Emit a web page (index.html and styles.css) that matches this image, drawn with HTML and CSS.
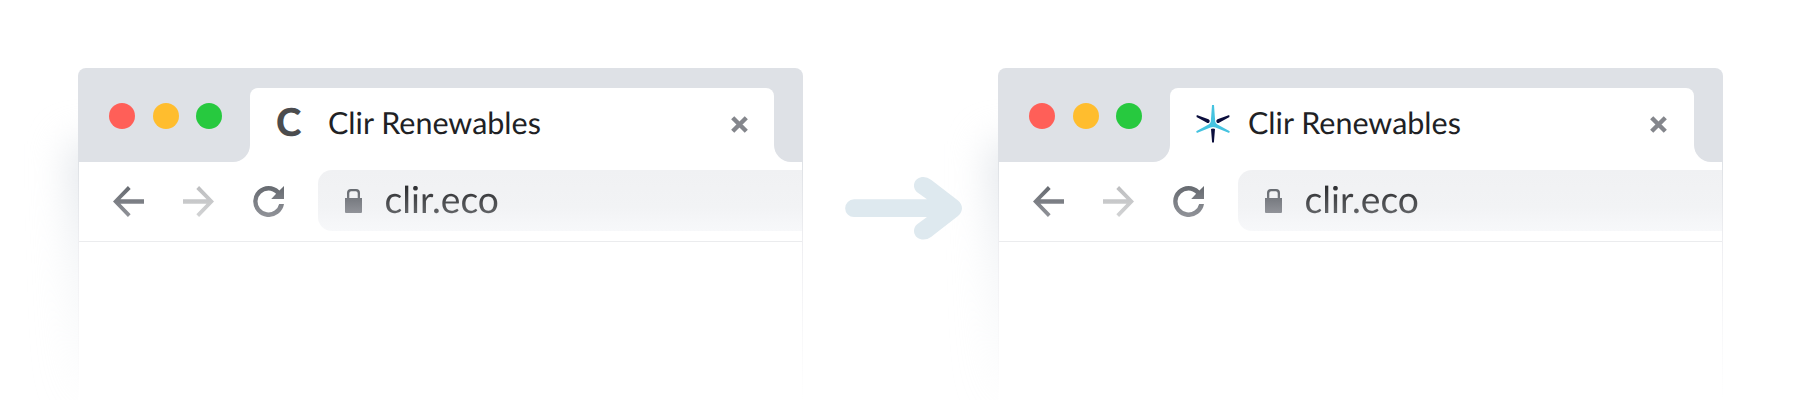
FILE: index.html
```html
<!DOCTYPE html>
<html lang="en">
<head>
<meta charset="utf-8">
<title>Clir Renewables</title>
<link rel="stylesheet" href="styles.css">
</head>
<body>
<svg class="defs" width="0" height="0" aria-hidden="true">
  <defs>
    <linearGradient id="ink" x1="0" y1="0" x2="0" y2="1"><stop offset="0" stop-color="#666a70"/><stop offset="1" stop-color="#919399"/></linearGradient>
    <linearGradient id="ink-light" x1="0" y1="0" x2="0" y2="1"><stop offset="0" stop-color="#bdbec0"/><stop offset="1" stop-color="#d2d3d4"/></linearGradient>
    <symbol id="back" viewBox="4 4 16 16"><path d="M20 10.800H7.830l5.300-5.300L11.700 4l-7.700 8 7.700 8 1.410-1.410L7.830 13.200H20z"/></symbol>
    <symbol id="forward" viewBox="4 4 16 16"><path d="M4 10.800h12.170l-5.300-5.300L12.300 4l7.700 8-7.700 8-1.410-1.410L16.170 13.200H4z"/></symbol>
    <symbol id="reload" viewBox="4 4 16 16"><path d="M17.650 6.350A7.960 7.960 0 0 0 12 4a8 8 0 1 0 8 9.300H17.500A5.650 5.650 0 1 1 12 6.350c1.560 0 2.900.64 3.950 1.700L13.400 10.700H20V4z"/></symbol>
    <symbol id="lock" viewBox="0 0 17 24"><path fill-rule="evenodd" d="M0 9h2V4a4 4 0 0 1 4-4h5a4 4 0 0 1 4 4v5h2v14a1 1 0 0 1-1 1H1a1 1 0 0 1-1-1zM4.300 9h8.400V4.300a2 2 0 0 0-2-2H6.300a2 2 0 0 0-2 2z"/></symbol>
    <symbol id="close" viewBox="0 0 17 17"><path d="M1.700 1.700l13.600 13.600M15.300 1.700L1.700 15.300" fill="none" stroke="#84868c" stroke-width="4.400"/></symbol>
  </defs>
</svg>
<main class="scene">
  <section class="browser">
    <header class="tabbar">
      <div class="controls"><i class="dot red"></i><i class="dot yellow"></i><i class="dot green"></i></div>
      <div class="tab-slot"><div class="tab">
        <span class="favicon letter">C</span>
        <span class="title">Clir Renewables</span>
        <svg class="close"><use href="#close"/></svg>
      </div></div>
      <div class="tab-end"></div>
    </header>
    <nav class="toolbar">
      <svg class="nav-icon" fill="url(#ink)"><use href="#back"/></svg>
      <svg class="nav-icon" fill="url(#ink-light)"><use href="#forward"/></svg>
      <svg class="nav-icon" fill="url(#ink)"><use href="#reload"/></svg>
      <div class="address"><svg class="lock" fill="url(#ink)"><use href="#lock"/></svg><span class="url">clir.eco</span></div>
    </nav>
    <div class="page"></div>
  </section>

  <svg class="arrow" viewBox="0 0 117 63" fill="#dee9ef"><path d="M9 22.300H82L72.500 15.500C66 10 69 0 78.500 0Q82.500 0 86 2.700L113 23.500Q117 27 117 31.300T113 39L86 60Q82.500 62.500 78.500 62.500C69 62.500 66 52 72.500 47L82 40H9A8.800 8.800 0 0 1 9 22.300z"/></svg>

  <section class="browser updated">
    <header class="tabbar">
      <div class="controls"><i class="dot red"></i><i class="dot yellow"></i><i class="dot green"></i></div>
      <div class="tab-slot"><div class="tab">
        <svg class="favicon star" viewBox="0 0 34 38">
          <path fill="#0b0e3d" d="M.8 10L12.500 14.300Q14.600 15.700 13 17.800Q11.800 18.400 10.500 17.500L.5 12zM33.200 10L21.500 14.300Q19.400 15.700 21 17.800Q22.200 18.400 23.500 17.500L33.500 12zM15 24Q17 23 19 24L17.900 37.500H16.100z"/>
          <path fill="#45c3e0" d="M16 0h2L19.200 16.500Q19.500 18.300 21 19.200L33.800 26.200L33.100 27.900L19.500 22.600Q17 21.500 14.500 22.600L.9 27.900L.2 26.200L13 19.200Q14.500 18.300 14.800 16.500z"/>
        </svg>
        <span class="title">Clir Renewables</span>
        <svg class="close"><use href="#close"/></svg>
      </div></div>
      <div class="tab-end"></div>
    </header>
    <nav class="toolbar">
      <svg class="nav-icon" fill="url(#ink)"><use href="#back"/></svg>
      <svg class="nav-icon" fill="url(#ink-light)"><use href="#forward"/></svg>
      <svg class="nav-icon" fill="url(#ink)"><use href="#reload"/></svg>
      <div class="address"><svg class="lock" fill="url(#ink)"><use href="#lock"/></svg><span class="url">clir.eco</span></div>
    </nav>
    <div class="page"></div>
  </section>
</main>
</body>
</html>
```

FILE: styles.css
```css
* { box-sizing: border-box; }
body { margin: 0; background: #fff; font-family: Lato, sans-serif; overflow: hidden; text-rendering: geometricPrecision; }
.defs { position: absolute; }
svg { display: block; flex: none; }
.scene { display: flex; align-items: flex-start; height: 400px; padding: 68px 77px 0 78px; }
.browser { position: relative; flex: none; width: 725px; height: 332px; display: flex; flex-direction: column; }
.browser::before {
  content: ""; position: absolute; z-index: -1; left: -8px; top: 76px; width: 100px; height: 270px;
  background: linear-gradient(#dfe3e8, rgba(225, 230, 235, .4) 45%, rgba(255, 255, 255, 0));
  filter: blur(19px);
}
/* side borders dissolve toward the bottom of the window */
.browser::after {
  content: ""; position: absolute; inset: 94px 0 0; pointer-events: none;
  background:
    linear-gradient(#dfe2e6, #efeff2 35%, #fff) left / 1px 100% no-repeat,
    linear-gradient(#dfe2e6, #efeff2 35%, #fff) right / 1px 100% no-repeat;
}
.tabbar { display: flex; height: 94px; background: #fff; border-radius: 8px 8px 0 0; overflow: hidden; }
.controls { display: flex; gap: 17.500px; width: 172px; padding: 35px 0 0 31px; background: #dee1e6; border-bottom-right-radius: 17px; flex: none; }
.dot { width: 26px; height: 26px; border-radius: 50%; }
.red { background: #ff5f58; }
.yellow { background: #ffbd2e; }
.green { background: #27c93f; }
.tab-slot { flex: 1; padding-top: 20px; background: linear-gradient(#dee1e6 40px, #fff 40px); }
.tab { display: flex; align-items: center; height: 74px; padding: 0 26px 3px 26px; background: #fff; border-radius: 8px 8px 0 0; }
.updated .tab { padding-right: 27px; }
.favicon { flex: none; width: 34px; margin-right: 18px; }
.letter { font-size: 38.500px; font-weight: 900; line-height: 70px; padding-bottom: 3px; color: #4b4c4e; }
.star { height: 38px; }
.title { flex: 1; padding-bottom: 2px; font-size: 30.500px; line-height: 40px; color: #202124; white-space: nowrap; }
.close { width: 17px; height: 17px; margin-top: 2px; }
.tab-end { width: 29px; background: #dee1e6; border-bottom-left-radius: 17px; flex: none; }
.toolbar { display: flex; align-items: center; gap: 39px; height: 80px; padding: 0 1px 2px 35px; background: #fff; border-bottom: 1px solid #ebecee; }
.nav-icon { width: 31px; height: 31px; margin-top: 2px; }
.address { display: flex; align-items: center; flex: 1; height: 61px; margin-left: -5px; padding-left: 27px; border-radius: 14px 0 0 14px; background: linear-gradient(#f0f1f3, #f2f3f5 60%, #f7f8fa); }
.lock { width: 17px; height: 24px; }
.url { margin: -4px 0 0 22.500px; font-size: 37.200px; line-height: 50px; color: transparent; background: linear-gradient(#2d2e31 25%, #626467 80%); background-clip: text; -webkit-background-clip: text; }
.page { flex: 1; background: #fff; }
.arrow { width: 117px; height: 63px; margin: 108.500px 36px 0 42px; }
```
